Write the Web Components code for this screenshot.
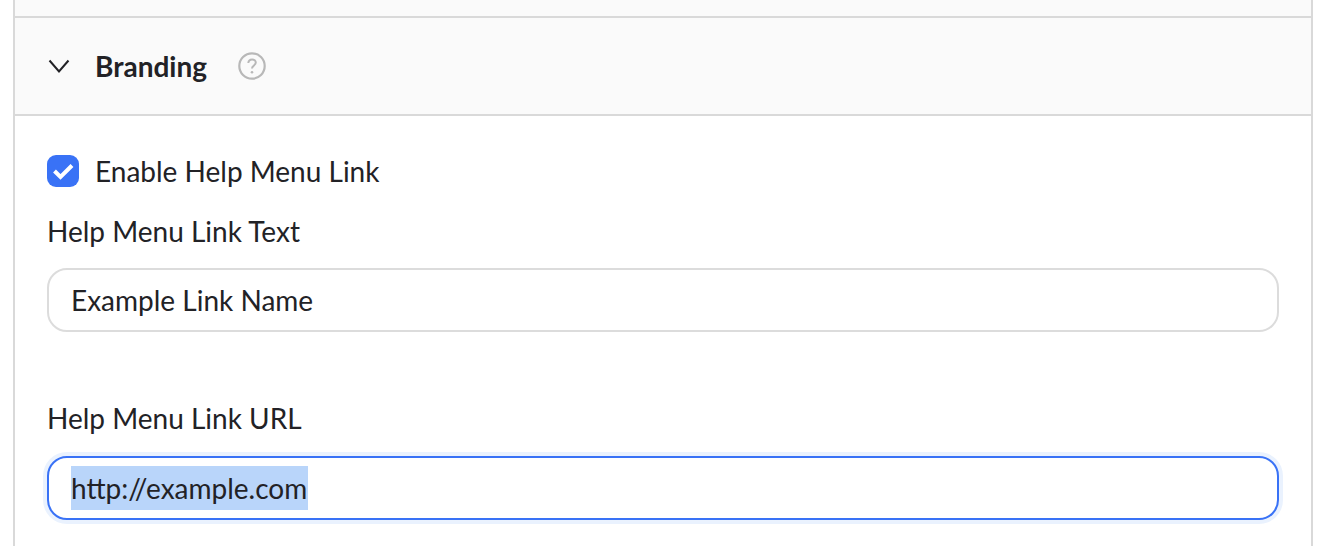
<!DOCTYPE html>
<html>
<head>
<meta charset="utf-8">
<title>Branding</title>
<style>
 html, body { margin: 0; height: 546px; overflow: hidden; background: #fff; }
 body { font: 28px/44px Lato, "Open Sans", sans-serif; color: #222226; }
</style>
</head>
<body>
<settings-panel>
 <section-header>Branding</section-header>
 <form-check>Enable Help Menu Link</form-check>
 <text-field label="Help Menu Link Text" value="Example Link Name"></text-field>
 <text-field label="Help Menu Link URL" value="http://example.com" focused></text-field>
</settings-panel>
<script>
customElements.define("settings-panel", class SettingsPanel extends HTMLElement {
 constructor() {
  super();
  this.attachShadow({mode: "open"}).innerHTML = `
   <style>
    :host {
     display: block; margin: 0 15px 0 13px; height: 546px; box-sizing: border-box;
     border: solid #d9d9d9; border-width: 0 2px; background: #fff;
    }
    .top { height: 16px; background: #fafafa; border-bottom: 2px solid #d9d9d9; }
    .body { padding: 33px 32px 0; display: flex; flex-direction: column; }
   </style>
   <div class="top"></div>
   <slot name="head"></slot>
   <div class="body"><slot></slot></div>
  `;
 }
 connectedCallback() {
  const head = this.querySelector("section-header");
  if (head) head.slot = "head";
 }
});

customElements.define("section-header", class SectionHeader extends HTMLElement {
 constructor() {
  super();
  this.attachShadow({mode: "open"}).innerHTML = `
   <style>
    :host {
     display: flex; align-items: center; height: 96px; padding-left: 32px;
     background: #fafafa; border-bottom: 2px solid #d9d9d9;
    }
    svg { display: block; flex: none; }
    .chev { width: 24px; height: 24px; margin-right: 24px; }
    .title { font-weight: 700; }
    .help { width: 28px; height: 28px; margin-left: 31px; }
   </style>
   <svg class="chev" viewBox="0 0 24 24"><path d="M2.500 6.500 12 17.500 21.500 6.500" fill="none" stroke="#222226" stroke-width="2"/></svg>
   <span class="title"><slot></slot></span>
   <svg class="help" viewBox="0 0 28 28">
    <circle cx="14" cy="14" r="12.700" fill="none" stroke="#b8b8b8" stroke-width="2.200"/>
    <path d="M10.300 11c.2-2.300 1.800-3.600 3.800-3.600s3.700 1.300 3.700 3.200c0 2.900-3.800 2.800-3.800 5.900" fill="none" stroke="#b8b8b8" stroke-width="2"/>
    <circle cx="14" cy="20.300" r="1.300" fill="#b8b8b8"/>
   </svg>
  `;
 }
});

customElements.define("form-check", class FormCheck extends HTMLElement {
 constructor() {
  super();
  this.attachShadow({mode: "open"}).innerHTML = `
   <style>
    :host { display: flex; align-items: center; gap: 16px; height: 44px; }
    svg { display: block; width: 32px; height: 32px; flex: none; }
   </style>
   <svg viewBox="0 0 32 32">
    <rect width="32" height="32" rx="9" fill="#3972f6"/>
    <path d="M7.500 16 13.500 22 25 10.500" fill="none" stroke="#fff" stroke-width="4"/>
   </svg>
   <span><slot></slot></span>
  `;
 }
});

customElements.define("text-field", class TextField extends HTMLElement {
 constructor() {
  super();
  const focused = this.hasAttribute("focused");
  const value = this.getAttribute("value");
  this.attachShadow({mode: "open"}).innerHTML = `
   <style>
    :host { display: block; margin-top: 16px; padding-bottom: 48px; }
    :host([focused]) { padding-bottom: 0; }
    label { display: block; margin-bottom: 15px; }
    :host([focused]) label { margin-bottom: 16px; }
    .box {
     box-sizing: border-box; height: 64px; padding: 0 22px; display: flex; align-items: center;
     border: 2px solid #dcdcdc; border-radius: 20px; background: #fff;
    }
    :host([focused]) .box { border-color: #3972f6; box-shadow: 0 0 0 4px #eaf2fe; }
    .sel { background: #b9d5fa; padding-right: 1px; }
   </style>
   <label>${this.getAttribute("label")}</label>
   <div class="box"><span class="${focused ? "sel" : ""}">${value}</span></div>
  `;
 }
});
</script>
</body>
</html>
